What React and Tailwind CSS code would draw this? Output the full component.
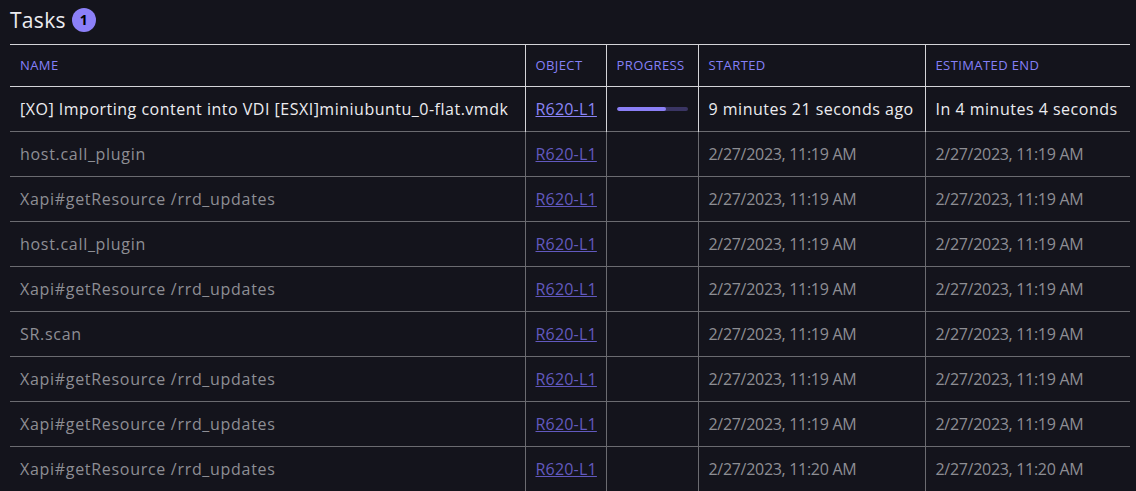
import React from 'react';

const tasks = [
    { name: 'host.call_plugin', started: '2/27/2023, 11:19 AM', end: '2/27/2023, 11:19 AM' },
    { name: 'Xapi#getResource /rrd_updates', started: '2/27/2023, 11:19 AM', end: '2/27/2023, 11:19 AM' },
    { name: 'host.call_plugin', started: '2/27/2023, 11:19 AM', end: '2/27/2023, 11:19 AM' },
    { name: 'Xapi#getResource /rrd_updates', started: '2/27/2023, 11:19 AM', end: '2/27/2023, 11:19 AM' },
    { name: 'SR.scan', started: '2/27/2023, 11:19 AM', end: '2/27/2023, 11:19 AM' },
    { name: 'Xapi#getResource /rrd_updates', started: '2/27/2023, 11:19 AM', end: '2/27/2023, 11:19 AM' },
    { name: 'Xapi#getResource /rrd_updates', started: '2/27/2023, 11:19 AM', end: '2/27/2023, 11:19 AM' },
    { name: 'Xapi#getResource /rrd_updates', started: '2/27/2023, 11:20 AM', end: '2/27/2023, 11:20 AM' },
];

const App = () => {
    return (
        <div className="min-h-screen bg-[#14141c] px-[10px] pt-[5px] font-['Open_Sans',sans-serif] overflow-hidden h-[491px]">
            {/* Title */}
            <div className="flex items-center gap-[6px] h-[30px]">
                <h1 className="text-[21px] font-medium text-[#ececf0] leading-none tracking-[0.3px]">Tasks</h1>
                <span className="flex items-center justify-center w-[24px] h-[24px] rounded-full bg-[#8c80f8] text-[14px] font-bold text-black leading-none">
                    1
                </span>
            </div>

            {/* Table */}
            <table className="w-[1120px] table-fixed border-collapse mt-[9px] text-[16px] tracking-[0.5px]">
                <colgroup>
                    <col className="w-[515px]" />
                    <col className="w-[81px]" />
                    <col className="w-[92px]" />
                    <col className="w-[227px]" />
                    <col className="w-[205px]" />
                </colgroup>
                <thead>
                    <tr className="h-[42px] border-y border-[#d4d4d8] text-[13px] tracking-[0.4px] text-[#8580f8] text-left uppercase">
                        <th className="font-normal px-[10px]">Name</th>
                        <th className="font-normal px-[10px] border-l border-[#d4d4d8]">Object</th>
                        <th className="font-normal px-[10px] border-l border-[#d4d4d8]">Progress</th>
                        <th className="font-normal px-[10px] border-l border-[#d4d4d8]">Started</th>
                        <th className="font-normal px-[10px] border-l border-[#d4d4d8]">Estimated end</th>
                    </tr>
                </thead>
                <tbody>
                    <tr className="h-[45px] border-b border-[#6b6b70] text-[#ececf0] whitespace-nowrap">
                        <td className="px-[10px]">[XO] Importing content into VDI [ESXI]miniubuntu_0-flat.vmdk</td>
                        <td className="px-[10px] border-l border-[#d4d4d8]">
                            <a href="#" className="underline text-[#8b84f6] tracking-[0.2px]">R620-L1</a>
                        </td>
                        <td className="px-[10px] border-l border-[#d4d4d8]">
                            <div className="w-[71px] h-[4px] rounded-full bg-[#3a3563] overflow-hidden">
                                <div className="w-[49px] h-full rounded-full bg-[#8b7ff6]"></div>
                            </div>
                        </td>
                        <td className="px-[10px] border-l border-[#d4d4d8]">9 minutes 21 seconds ago</td>
                        <td className="px-[10px] border-l border-[#d4d4d8]">In 4 minutes 4 seconds</td>
                    </tr>
                    {tasks.map((task, i) => (
                        <tr key={i} className="h-[45px] border-b border-[#6b6b70] text-[#8e8e94] whitespace-nowrap">
                            <td className="px-[10px] tracking-[0.7px]">{task.name}</td>
                            <td className="px-[10px] border-l border-[#6b6b70]">
                                <a href="#" className="underline text-[#6259bf] tracking-[0.2px]">R620-L1</a>
                            </td>
                            <td className="px-[10px] border-l border-[#6b6b70]"></td>
                            <td className="px-[10px] border-l border-[#6b6b70] tracking-[-0.3px]">{task.started}</td>
                            <td className="px-[10px] border-l border-[#6b6b70] tracking-[-0.3px]">{task.end}</td>
                        </tr>
                    ))}
                </tbody>
            </table>
        </div>
    );
};

export default App;
